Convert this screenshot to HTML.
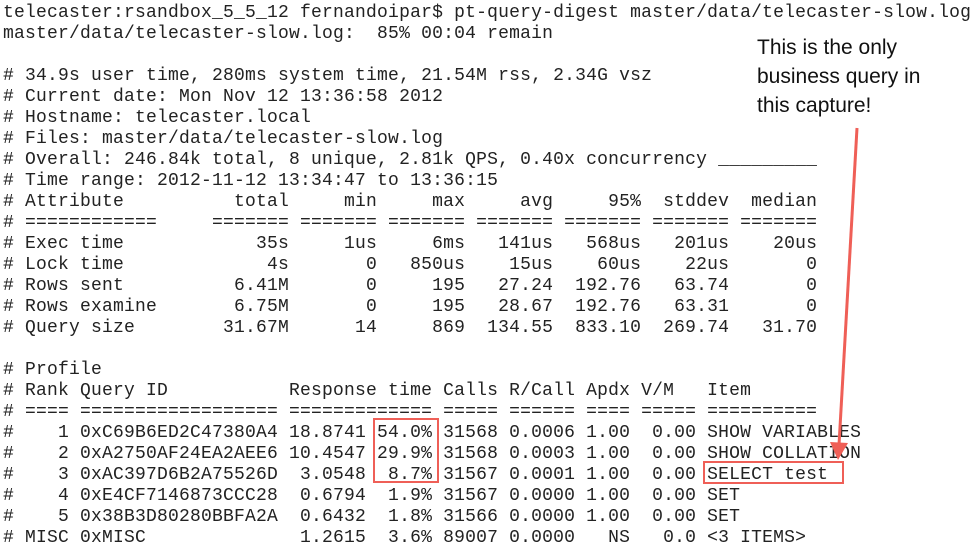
<!DOCTYPE html>
<html><head><meta charset="utf-8"><style>
html,body{margin:0;padding:0;background:#fff;width:977px;height:554px;overflow:hidden;position:relative}
pre{position:absolute;left:3px;top:3px;margin:0;font-family:"Liberation Mono",monospace;font-size:18px;letter-spacing:0.2px;line-height:21px;color:#222}
.note{position:absolute;left:757px;top:33px;font-family:"Liberation Sans",sans-serif;font-size:21px;line-height:29px;color:#111}
.box{position:absolute;border:2.5px solid #ef5f57;box-sizing:border-box}
</style></head><body>
<pre>telecaster:rsandbox_5_5_12 fernandoipar$ pt-query-digest master/data/telecaster-slow.log
master/data/telecaster-slow.log:  85% 00:04 remain

# 34.9s user time, 280ms system time, 21.54M rss, 2.34G vsz
# Current date: Mon Nov 12 13:36:58 2012
# Hostname: telecaster.local
# Files: master/data/telecaster-slow.log
# Overall: 246.84k total, 8 unique, 2.81k QPS, 0.40x concurrency _________
# Time range: 2012-11-12 13:34:47 to 13:36:15
# Attribute          total     min     max     avg     95%  stddev  median
# ============     ======= ======= ======= ======= ======= ======= =======
# Exec time            35s     1us     6ms   141us   568us   201us    20us
# Lock time             4s       0   850us    15us    60us    22us       0
# Rows sent          6.41M       0     195   27.24  192.76   63.74       0
# Rows examine       6.75M       0     195   28.67  192.76   63.31       0
# Query size        31.67M      14     869  134.55  833.10  269.74   31.70

# Profile
# Rank Query ID           Response time Calls R/Call Apdx V/M   Item
# ==== ================== ============= ===== ====== ==== ===== ==========
#    1 0xC69B6ED2C47380A4 18.8741 54.0% 31568 0.0006 1.00  0.00 SHOW VARIABLES
#    2 0xA2750AF24EA2AEE6 10.4547 29.9% 31568 0.0003 1.00  0.00 SHOW COLLATION
#    3 0xAC397D6B2A75526D  3.0548  8.7% 31567 0.0001 1.00  0.00 SELECT test
#    4 0xE4CF7146873CCC28  0.6794  1.9% 31567 0.0000 1.00  0.00 SET
#    5 0x38B3D80280BBFA2A  0.6432  1.8% 31566 0.0000 1.00  0.00 SET
# MISC 0xMISC              1.2615  3.6% 89007 0.0000   NS   0.0 &lt;3 ITEMS&gt;</pre>
<div class="note">This is the only<br>business query in<br>this capture!</div>
<div class="box" style="left:373px;top:418px;width:66px;height:65px"></div>
<div class="box" style="left:703px;top:461px;width:141px;height:23px"></div>
<svg style="position:absolute;left:0;top:0" width="977" height="554">
<line x1="857" y1="128" x2="839" y2="445" stroke="#ef5f57" stroke-width="3"/>
<polygon points="830,442 848,443 838,460" fill="#ef5f57"/>
</svg>
</body></html>
